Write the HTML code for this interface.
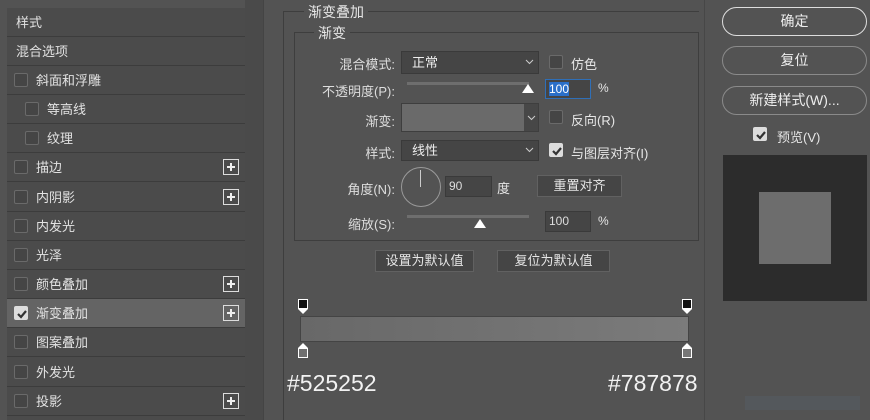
<!DOCTYPE html>
<html><head><meta charset="utf-8"><style>
*{margin:0;padding:0;box-sizing:border-box}
body{width:870px;height:420px;background:#535353;font-family:"Liberation Sans","Noto Sans CJK SC",sans-serif;color:#e6e6e6;font-size:13px;position:relative;overflow:hidden}
.a{position:absolute}
.list{left:7px;top:8px;width:238px;height:412px;background:#4b4b4b}
.row{position:absolute;left:0;width:238px;height:29px;border-bottom:1px solid #3c3c3c;line-height:29px;font-size:13px;color:#e2e2e2}
.cb{position:absolute;width:14px;height:14px;border:1px solid #6a6a6a;background:#454545;border-radius:2px}
.plus{position:absolute;right:6px;top:6px;width:16px;height:16px;border:1px solid #ddd;background:#4b4b4b}
.plus:before{content:"";position:absolute;left:3px;top:6px;width:8px;height:2px;background:#eee}
.plus:after{content:"";position:absolute;left:6px;top:3px;width:2px;height:8px;background:#eee}
.lbl{position:absolute;text-align:right;width:120px;color:#ddd;font-size:13px}
.dd{position:absolute;background:#454545;border:1px solid #3a3a3a;color:#eee;padding-left:10px;line-height:21px}
.inp{position:absolute;background:#454545;border:1px solid #3a3a3a;color:#ddd;line-height:18px;padding-left:3px;font-size:12px}
.btn{position:absolute;background:#454545;border:1px solid #616161;text-align:center;color:#e6e6e6;line-height:20px}
.rb{position:absolute;left:722px;width:145px;height:29px;border:1px solid #8a8a8a;border-radius:15px;text-align:center;line-height:27px;font-size:14px;color:#eee}
.chk{background:#ddd!important;border-color:#ddd!important}
.chk svg{position:absolute;left:1px;top:1px}
.chev{position:absolute}
</style></head><body>
<div class="a list">
 <div class="row" style="top:0;padding-left:9px">样式</div>
 <div class="row" style="top:29px;padding-left:9px">混合选项</div>
 <div class="row" style="top:58px;padding-left:29px"><span class="cb" style="left:7px;top:7px"></span>斜面和浮雕</div>
 <div class="row" style="top:87px;padding-left:40px"><span class="cb" style="left:18px;top:7px"></span>等高线</div>
 <div class="row" style="top:116px;padding-left:40px"><span class="cb" style="left:18px;top:7px"></span>纹理</div>
 <div class="row" style="top:145px;padding-left:29px"><span class="cb" style="left:7px;top:7px"></span>描边<span class="plus"></span></div>
 <div class="row" style="top:175px;padding-left:29px"><span class="cb" style="left:7px;top:7px"></span>内阴影<span class="plus"></span></div>
 <div class="row" style="top:204px;padding-left:29px"><span class="cb" style="left:7px;top:7px"></span>内发光</div>
 <div class="row" style="top:233px;padding-left:29px"><span class="cb" style="left:7px;top:7px"></span>光泽</div>
 <div class="row" style="top:262px;padding-left:29px"><span class="cb" style="left:7px;top:7px"></span>颜色叠加<span class="plus"></span></div>
 <div class="row" style="top:291px;padding-left:29px;background:#646464"><span class="cb chk" style="left:7px;top:7px"><svg width="12" height="12"><path d="M2 6 L5 9 L10 3" stroke="#333" stroke-width="2.2" fill="none"/></svg></span>渐变叠加<span class="plus" style="background:#646464"></span></div>
 <div class="row" style="top:320px;padding-left:29px"><span class="cb" style="left:7px;top:7px"></span>图案叠加</div>
 <div class="row" style="top:350px;padding-left:29px"><span class="cb" style="left:7px;top:7px"></span>外发光</div>
 <div class="row" style="top:379px;padding-left:29px"><span class="cb" style="left:7px;top:7px"></span>投影<span class="plus"></span></div>
</div>
<div class="a" style="left:245px;top:0;width:18px;height:420px;background:#4a4a4a"></div>
<div class="a" style="left:263px;top:0;width:1px;height:420px;background:#444"></div>
<div class="a" style="left:704px;top:0;width:1px;height:420px;background:#474747"></div>

<div class="a" style="left:283px;top:11px;width:416px;height:1px;background:#3e3e3e"></div>
<div class="a" style="left:283px;top:11px;width:1px;height:409px;background:#3e3e3e"></div>
<div class="a" style="left:304px;top:2px;background:#535353;padding:0 4px;font-size:14px">渐变叠加</div>
<div class="a" style="left:294px;top:32px;width:405px;height:209px;border:1px solid #3e3e3e"></div>
<div class="a" style="left:314px;top:23px;background:#535353;padding:0 4px;font-size:14px">渐变</div>

<div class="lbl" style="left:275px;top:54px">混合模式:</div>
<div class="dd" style="left:401px;top:51px;width:138px;height:23px">正常</div>
<svg class="chev" style="left:525px;top:59px" width="9" height="6"><path d="M1 1 L4.5 4.5 L8 1" stroke="#ccc" fill="none"/></svg>
<span class="cb" style="left:549px;top:55px"></span><div class="a" style="left:571px;top:54px">仿色</div>

<div class="lbl" style="left:275px;top:81px">不透明度(P):</div>
<div class="a" style="left:407px;top:82px;width:122px;height:3px;background:#6e6e6e"></div>
<div class="a" style="left:522px;top:84px;width:0;height:0;border-left:6px solid transparent;border-right:6px solid transparent;border-bottom:9px solid #fff"></div>
<div class="inp" style="left:545px;top:79px;width:46px;height:20px;border-color:#2f6fb7"><span style="background:#2a6fc9;color:#fff">100</span></div>
<div class="a" style="left:598px;top:81px;font-size:12px">%</div>

<div class="lbl" style="left:275px;top:111px">渐变:</div>
<div class="a" style="left:401px;top:103px;width:138px;height:29px;background:#6a6a6a;border:1px solid #3e3e3e"></div>
<div class="a" style="left:524px;top:104px;width:14px;height:27px;background:#474747"></div>
<svg class="chev" style="left:527px;top:115px" width="9" height="6"><path d="M1 1 L4.5 4.5 L8 1" stroke="#ccc" fill="none"/></svg>
<span class="cb" style="left:549px;top:110px"></span><div class="a" style="left:571px;top:110px">反向(R)</div>

<div class="lbl" style="left:275px;top:143px">样式:</div>
<div class="dd" style="left:401px;top:140px;width:138px;height:21px;line-height:19px">线性</div>
<svg class="chev" style="left:525px;top:147px" width="9" height="6"><path d="M1 1 L4.5 4.5 L8 1" stroke="#ccc" fill="none"/></svg>
<span class="cb chk" style="left:549px;top:143px"><svg width="12" height="12"><path d="M2 6 L5 9 L10 3" stroke="#333" stroke-width="2.2" fill="none"/></svg></span><div class="a" style="left:571px;top:143px">与图层对齐(I)</div>

<div class="lbl" style="left:275px;top:179px">角度(N):</div>
<div class="a" style="left:401px;top:167px;width:40px;height:40px;border:1px solid #9a9a9a;border-radius:50%"></div>
<div class="a" style="left:420px;top:170px;width:1px;height:17px;background:#ccc"></div>
<div class="inp" style="left:445px;top:176px;width:47px;height:21px;line-height:19px">90</div>
<div class="a" style="left:497px;top:178px">度</div>
<div class="btn" style="left:537px;top:175px;width:85px;height:22px">重置对齐</div>

<div class="lbl" style="left:275px;top:214px">缩放(S):</div>
<div class="a" style="left:407px;top:215px;width:122px;height:3px;background:#6e6e6e"></div>
<div class="a" style="left:474px;top:219px;width:0;height:0;border-left:6px solid transparent;border-right:6px solid transparent;border-bottom:9px solid #fff"></div>
<div class="inp" style="left:545px;top:211px;width:46px;height:21px;line-height:19px">100</div>
<div class="a" style="left:598px;top:214px;font-size:12px">%</div>

<div class="btn" style="left:375px;top:250px;width:99px;height:22px">设置为默认值</div>
<div class="btn" style="left:497px;top:250px;width:113px;height:22px">复位为默认值</div>

<div class="a" style="left:298px;top:299px;width:10px;height:10px;background:#111;border:1px solid #fff"></div>
<div class="a" style="left:298px;top:309px;border-left:5px solid transparent;border-right:5px solid transparent;border-top:5px solid #fff"></div>
<div class="a" style="left:682px;top:299px;width:10px;height:10px;background:#111;border:1px solid #fff"></div>
<div class="a" style="left:682px;top:309px;border-left:5px solid transparent;border-right:5px solid transparent;border-top:5px solid #fff"></div>
<div class="a" style="left:300px;top:316px;width:389px;height:26px;background:linear-gradient(90deg,#686868,#7b7b7b);border:1px solid #444"></div>
<div class="a" style="left:298px;top:343px;border-left:5px solid transparent;border-right:5px solid transparent;border-bottom:5px solid #fff"></div>
<div class="a" style="left:298px;top:348px;width:10px;height:10px;background:#707070;border:1px solid #fff"></div>
<div class="a" style="left:682px;top:343px;border-left:5px solid transparent;border-right:5px solid transparent;border-bottom:5px solid #fff"></div>
<div class="a" style="left:682px;top:348px;width:10px;height:10px;background:#777;border:1px solid #fff"></div>
<div class="a" style="left:287px;top:370px;font-size:23px;color:#f2f2f2">#525252</div>
<div class="a" style="left:608px;top:370px;font-size:23px;color:#f2f2f2">#787878</div>

<div class="rb" style="top:7px;border-color:#ddd">确定</div>
<div class="rb" style="top:46px">复位</div>
<div class="rb" style="top:86px">新建样式(W)...</div>
<span class="cb chk" style="left:753px;top:127px"><svg width="12" height="12"><path d="M2 6 L5 9 L10 3" stroke="#333" stroke-width="2.2" fill="none"/></svg></span><div class="a" style="left:777px;top:127px;font-size:13px">预览(V)</div>
<div class="a" style="left:723px;top:155px;width:144px;height:146px;background:#2c2c2c"></div>
<div class="a" style="left:759px;top:192px;width:72px;height:72px;background:#6d6d6d"></div>
<div class="a" style="left:745px;top:396px;width:115px;height:14px;background:#58626b;opacity:.4"></div>
</body></html>
